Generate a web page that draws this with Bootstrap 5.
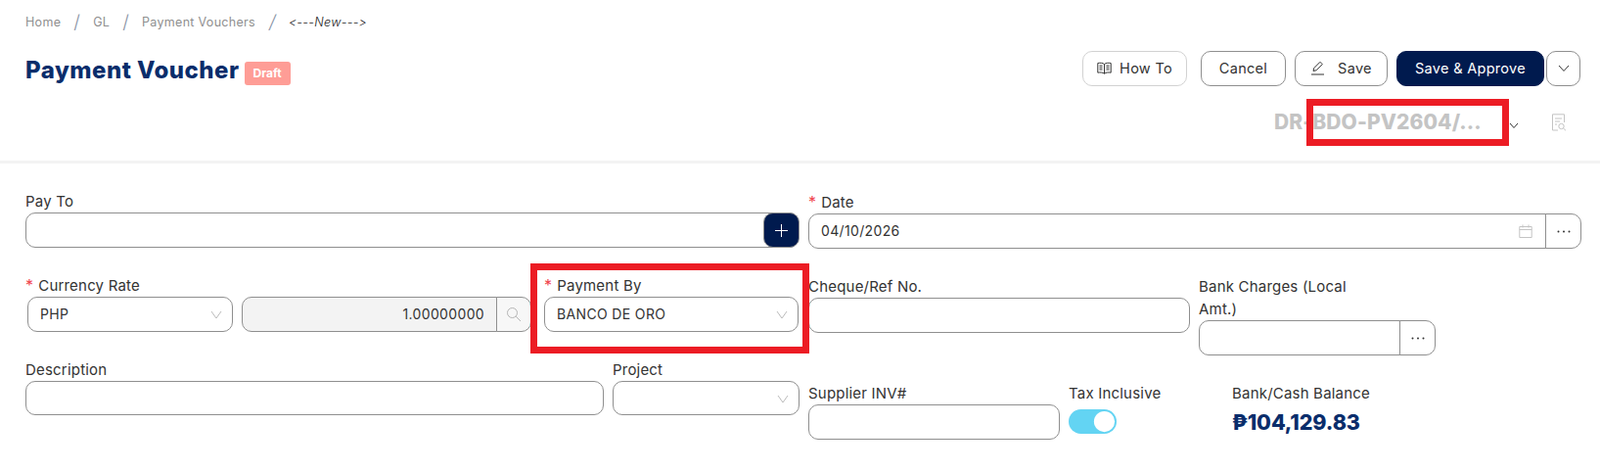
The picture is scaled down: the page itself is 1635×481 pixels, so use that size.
<!DOCTYPE html>
<html lang="en">
<head>
    <meta charset="UTF-8">
    <meta name="viewport" content="width=device-width, initial-scale=1">
    <title>Payment Voucher</title>
    <link href="https://cdn.jsdelivr.net/npm/bootstrap@5.3.0/dist/css/bootstrap.min.css" rel="stylesheet">
    <style>
        body { font-family: Inter, "Noto Sans", sans-serif; font-size: 14px; color: #333; background: #fff; }

        /* header */
        .page-head { height: 167px; padding: 15px 20px 0 26px; border-bottom: 3px solid #f3f3f3; }
        .crumbs { height: 37px; margin: 0; font-size: 12.5px; align-items: center; align-content: flex-start; line-height: 16px; letter-spacing: .3px; }
        .crumbs .breadcrumb-item { color: #8f8f8f; }
        .crumbs .breadcrumb-item + .breadcrumb-item { padding-left: 13px; }
        .crumbs .breadcrumb-item + .breadcrumb-item::before { content: "/"; color: #8a94a6; font-size: 19px; line-height: 16px; font-weight: 300; padding-right: 13px; float: left; }
        .crumbs .breadcrumb-item.active { color: #222; font-style: italic; font-weight: 300; font-size: 12.5px; padding-left: 14px; }
        .page-title { font-size: 24px; font-weight: 800; color: #0a2d6b; margin: 0; height: 36px; line-height: 40px; letter-spacing: .5px; }
        .draft-tag { background: #fe9d96; color: #fff; font-size: 12px; font-weight: 700; height: 24px; width: 47px; border-radius: 3px; margin: 10px 0 0 1px; }
        .head-btn { height: 36px; border: 1px solid #8f8f8f; border-radius: 10px; background: #fff; color: #333; font-size: 14.5px; padding: 0 0 1px; letter-spacing: .3px; }
        .btn-howto { width: 107px; border-color: #d2d2d2; margin-right: 14px; }
        .btn-cancel { width: 87px; margin-right: 9px; }
        .btn-save { width: 95px; margin-right: 9px; }
        .btn-approve { width: 151px; background: #001a4e; border-color: #001a4e; color: #fff; margin-right: 2px; }
        .btn-approve:hover { background: #001a4e; color: #fff; }
        .btn-more { width: 35px; }
        .doc-line { height: 40px; margin-top: 17px; padding-right: 14px; }
        .doc-no { width: 210px; font-size: 21px; font-weight: 800; color: #c4c4c4; white-space: nowrap; letter-spacing: .1px; line-height: 36px; }
        .doc-caret { margin: 6px 33px 0 30px; }
        .mark-box { position: absolute; border: 7px solid #ec1c24; pointer-events: none; }
        .mark-doc { left: 33px; width: 207px; top: -6px; height: 48px; }
        .mark-pay { left: -14px; width: 285px; top: -11px; height: 92px; }

        /* form */
        .voucher-form { display: grid; grid-template-columns: 791px 790px; column-gap: 9px; padding-left: 26px; }
        .form-left { padding-top: 27px; }
        .form-right { padding-top: 28px; }
        .field-line { display: flex; margin-top: 27px; }
        .field-label { display: block; height: 23px; line-height: 23px; margin: 0; white-space: nowrap; font-size: 15px; letter-spacing: .2px; color: #333; }
        .field-label.two-line { height: 46px; }
        .req { color: #f0434c; margin-right: 5px; font-size: 16px; }
        .form-control, .form-select, .addon-btn { height: 36px; border: 1px solid #8f8f8f; border-radius: 10px; font-size: 14px; color: #333; letter-spacing: .35px; }
        .form-control { padding: 0 12px 2px; }
        .form-select { padding: 0 12px 2px; background-size: 12px 12px; background-position: right 10px center;
            background-image: url("data:image/svg+xml,%3csvg xmlns='http://www.w3.org/2000/svg' viewBox='0 0 12 12'%3e%3cpath fill='none' stroke='%23bbb' d='M1 3l5 7 5-7'/%3e%3c/svg%3e"); }
        .form-control:disabled { background: #f3f3f3; opacity: 1; }
        .input-group > .form-control { border-radius: 10px 0 0 10px; }
        .addon-btn { background: #fff; display: flex; align-items: center; justify-content: center; padding: 0; border-radius: 0 10px 10px 0; margin-left: -1px; }
        .addon-grey { background: #f7f7f7; width: 36px; }
        .addon-dots { width: 37px; }
        .add-btn { width: 37px; height: 36px; background: #001a4e; border: 1px solid #8f8f8f; border-radius: 10px; padding: 0; margin-left: -36px; position: relative; }
        .add-btn:hover { background: #001a4e; }
        .input-date { padding-right: 60px; }
        .cal-icon { position: absolute; right: 50px; top: 11px; z-index: 6; }

        .col-currency { width: 212px; margin-right: 9px; padding-left: 2px; }
        .col-currency .field-label { margin-left: -2px; }
        .col-rate { width: 296px; margin: 23px 13px 0 0; }
        .col-rate .form-control { text-align: right; padding-right: 12px; }
        .col-pay { width: 260px; }
        .col-desc { width: 591px; margin-right: 9px; }
        .col-desc .form-control, .col-proj .form-select { height: 35px; }
        .col-proj { width: 191px; }
        .col-cheque { width: 390px; margin-right: 9px; }
        .col-bank { width: 242px; }
        .col-supplier { width: 257px; margin-right: 9px; }
        .col-tax { width: 167px; }
        .tax-switch { min-height: 0; padding: 0; margin: 5px 0 0 0; }
        .tax-switch .form-check-input { width: 49px; height: 25px; margin: 0; float: none; border: 0; background-color: #63d4f3; display: block; }
        .tax-switch .form-check-input:checked { background-image: url("data:image/svg+xml,%3csvg xmlns='http://www.w3.org/2000/svg' viewBox='-4 -4 8 8'%3e%3ccircle r='3.400' fill='%23fff'/%3e%3c/svg%3e"); }
        .balance-value { font-size: 21.5px; font-weight: 800; color: #0a2d6b; line-height: 36px; letter-spacing: -.1px; }
    </style>
</head>
<body>
<!-- header -->
<div class="page-head">
    <ol class="breadcrumb crumbs">
        <li class="breadcrumb-item">Home</li>
        <li class="breadcrumb-item">GL</li>
        <li class="breadcrumb-item">Payment Vouchers</li>
        <li class="breadcrumb-item active">&lt;---New---&gt;</li>
    </ol>
    <div class="d-flex justify-content-between align-items-center">
        <div class="d-flex align-items-center gap-1">
            <h1 class="page-title">Payment Voucher</h1>
            <span class="draft-tag d-flex align-items-center justify-content-center">Draft</span>
        </div>
        <div class="d-flex">
            <button class="btn head-btn btn-howto d-flex align-items-center justify-content-center gap-2" type="button">
                <svg width="15" height="13" viewBox="0 0 15 13" fill="none" stroke="#333"><path d="M7.5 2.5C6 1.2 3 1 .8 1.5v9.7c2.2-.5 5.200-.3 6.700 1 1.500-1.300 4.500-1.500 6.700-1V1.500C12 1 9 1.200 7.500 2.500zM7.500 2.500v9.700M2.500 4h3M2.500 6h3M2.500 8h3M9.500 4h3M9.500 6h3M9.500 8h3"/></svg>
                How To
            </button>
            <button class="btn head-btn btn-cancel" type="button">Cancel</button>
            <button class="btn head-btn btn-save d-flex align-items-center justify-content-center gap-2" type="button">
                <svg width="16" height="15" viewBox="0 0 16 15" fill="none" stroke="#333"><path d="M3 10.500l.8-3L10 1.300l2.300 2.300-6.200 6.200zM1 14h13"/></svg>
                <span class="ms-1">Save</span>
            </button>
            <button class="btn head-btn btn-approve" type="button">Save &amp; Approve</button>
            <button class="btn head-btn btn-more d-flex align-items-center justify-content-center" type="button">
                <svg width="12" height="8" viewBox="0 0 12 8" fill="none" stroke="#333"><path d="M1 1l5 5.500L11 1"/></svg>
            </button>
        </div>
    </div>
    <div class="doc-line d-flex justify-content-end align-items-center">
        <div class="position-relative d-flex align-items-center">
            <div class="doc-no">DR-BDO-PV2604/...</div>
            <div class="mark-box mark-doc"></div>
            <svg class="doc-caret" width="10" height="7" viewBox="0 0 10 7" fill="none" stroke="#333"><path d="M1 1l4 4.500L9 1"/></svg>
            <svg class="doc-view" width="16" height="18" viewBox="0 0 16 18" fill="none" stroke="#c4c4c4"><path d="M7 17H1.500V.800h12V9M4 5h7M4 8h5M4 11h2"/><circle cx="10.500" cy="13" r="2.700"/><path d="M12.500 15l2.500 2.300"/></svg>
        </div>
    </div>
</div>

<!-- form -->
<div class="voucher-form">
    <div class="form-left">
        <label class="field-label">Pay To</label>
        <div class="d-flex">
            <input class="form-control" type="text">
            <button class="btn add-btn d-flex align-items-center justify-content-center" type="button">
                <svg width="13" height="13" viewBox="0 0 13 13" stroke="#fff"><path d="M6.500 0v13M0 6.500h13"/></svg>
            </button>
        </div>

        <div class="field-line">
            <div class="col-currency">
                <label class="field-label"><span class="req">*</span>Currency Rate</label>
                <select class="form-select"><option>PHP</option></select>
            </div>
            <div class="col-rate input-group flex-nowrap">
                <input class="form-control" type="text" value="1.00000000" disabled>
                <span class="addon-btn addon-grey flex-shrink-0">
                    <svg width="16" height="16" viewBox="0 0 16 16" fill="none" stroke="#b5b5b5"><circle cx="6.500" cy="6.500" r="5"/><path d="M10.200 10.200L15 15"/></svg>
                </span>
            </div>
            <div class="col-pay position-relative">
                <label class="field-label"><span class="req">*</span>Payment By</label>
                <select class="form-select"><option>BANCO DE ORO</option></select>
                <div class="mark-box mark-pay"></div>
            </div>
        </div>

        <div class="field-line">
            <div class="col-desc">
                <label class="field-label">Description</label>
                <input class="form-control" type="text">
            </div>
            <div class="col-proj">
                <label class="field-label">Project</label>
                <select class="form-select"><option></option></select>
            </div>
        </div>
    </div>

    <div class="form-right">
        <label class="field-label"><span class="req">*</span>Date</label>
        <div class="input-group flex-nowrap position-relative">
            <input class="form-control input-date" type="text" value="04/10/2026">
            <svg class="cal-icon" width="14" height="14" viewBox="0 0 14 14" fill="none" stroke="#c4c4c4"><path d="M.800 2.500h12.400v11H.800zM.800 5.500h12.400M4 .500v3M10 .500v3"/></svg>
            <span class="addon-btn addon-dots flex-shrink-0">
                <svg width="14" height="3" viewBox="0 0 14 3" fill="#333"><circle cx="1.500" cy="1.500" r="1"/><circle cx="7" cy="1.500" r="1"/><circle cx="12.500" cy="1.500" r="1"/></svg>
            </span>
        </div>

        <div class="field-line">
            <div class="col-cheque">
                <label class="field-label">Cheque/Ref No.</label>
                <input class="form-control" type="text">
            </div>
            <div class="col-bank">
                <label class="field-label two-line">Bank Charges (Local<br>Amt.)</label>
                <div class="input-group flex-nowrap">
                    <input class="form-control" type="text">
                    <span class="addon-btn addon-dots flex-shrink-0">
                        <svg width="14" height="3" viewBox="0 0 14 3" fill="#333"><circle cx="1.500" cy="1.500" r="1"/><circle cx="7" cy="1.500" r="1"/><circle cx="12.500" cy="1.500" r="1"/></svg>
                    </span>
                </div>
            </div>
        </div>

        <div class="field-line">
            <div class="col-supplier">
                <label class="field-label">Supplier INV#</label>
                <input class="form-control" type="text">
            </div>
            <div class="col-tax">
                <label class="field-label">Tax Inclusive</label>
                <div class="form-check form-switch tax-switch">
                    <input class="form-check-input" type="checkbox" role="switch" checked>
                </div>
            </div>
            <div>
                <label class="field-label">Bank/Cash Balance</label>
                <div class="balance-value">₱104,129.83</div>
            </div>
        </div>
    </div>
</div>

<script src="https://cdn.jsdelivr.net/npm/bootstrap@5.3.0/dist/js/bootstrap.bundle.min.js"></script>
</body>
</html>
